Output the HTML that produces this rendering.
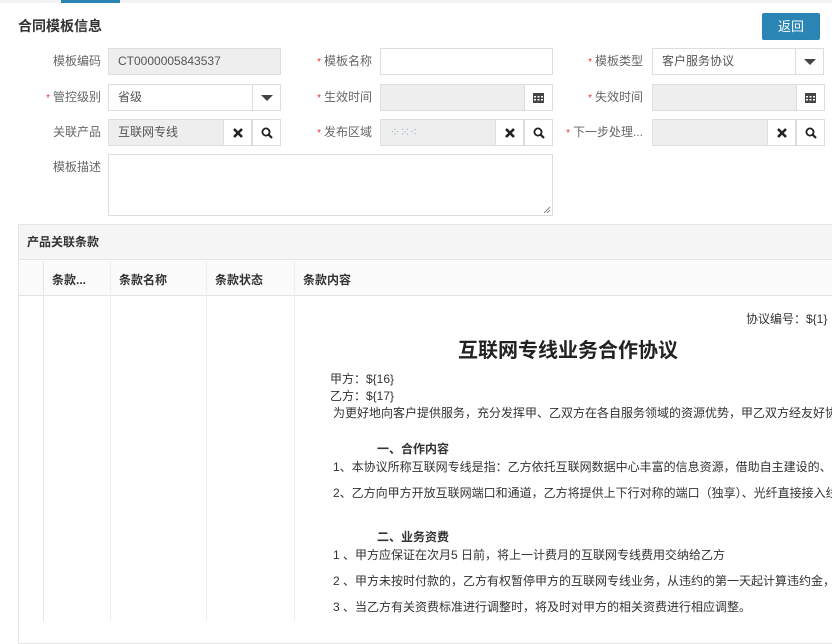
<!DOCTYPE html>
<html><head><meta charset="utf-8"><style>
*{box-sizing:border-box;margin:0;padding:0}
body{width:832px;height:618px;overflow:hidden;background:#fff;font-family:"Liberation Sans","Noto Sans CJK SC",sans-serif;font-size:12px;color:#555;position:relative}
.a{position:absolute}
.lbl{position:absolute;text-align:right;width:91px;line-height:27px;color:#666;font-size:12px;white-space:nowrap}
.lbl i{color:#e33;font-style:normal;font-size:10px;margin-right:3px}
.box{position:absolute;border:1px solid #ddd;height:27px;line-height:25px;padding-left:9px;color:#555;background:#fff}
.g{background:#eee}
.btn{position:absolute;border:1px solid #ddd;background:#fff;height:27px;width:29px;display:flex;align-items:center;justify-content:center}
.tri{width:0;height:0;border-left:6px solid transparent;border-right:6px solid transparent;border-top:6px solid #444}
.c{position:absolute;font-size:12px;color:#333;white-space:nowrap}
</style></head><body>
<div class="a" style="left:0;top:0;width:832px;height:3px;background:#f2f2f2"></div>
<div class="a" style="left:61px;top:0;width:59px;height:3px;background:#2a85b4"></div>
<div class="a" style="left:18px;top:16px;font-size:14px;font-weight:bold;color:#333">合同模板信息</div>
<div class="a" style="left:762px;top:13px;width:58px;height:27px;background:#2a85b4;border-radius:2px;color:#fff;text-align:center;line-height:27px;font-size:13px">返回</div>

<div class="lbl" style="left:10px;top:48px">模板编码</div>
<div class="box g" style="left:108px;top:48px;width:173px">CT0000005843537</div>
<div class="lbl" style="left:281px;top:48px"><i>*</i>模板名称</div>
<div class="box" style="left:380px;top:48px;width:173px"></div>
<div class="lbl" style="left:552px;top:48px"><i>*</i>模板类型</div>
<div class="box" style="left:652px;top:48px;width:144px">客户服务协议</div>
<div class="btn" style="left:795px;top:48px"><div class="tri"></div></div>

<div class="lbl" style="left:10px;top:84px"><i>*</i>管控级别</div>
<div class="box" style="left:108px;top:84px;width:145px">省级</div>
<div class="btn" style="left:252px;top:84px"><div class="tri"></div></div>
<div class="lbl" style="left:281px;top:84px"><i>*</i>生效时间</div>
<div class="box g" style="left:380px;top:84px;width:145px"></div>
<div class="btn" style="left:524px;top:84px"><svg width="11" height="11"><rect x="0" y="1" width="11" height="10" fill="#444"/><g fill="#fff"><rect x="1" y="4" width="2" height="1.5"/><rect x="4.5" y="4" width="2" height="1.5"/><rect x="8" y="4" width="2" height="1.5"/><rect x="1" y="7" width="2" height="1.5"/><rect x="4.5" y="7" width="2" height="1.5"/><rect x="8" y="7" width="2" height="1.5"/></g></svg></div>
<div class="lbl" style="left:552px;top:84px"><i>*</i>失效时间</div>
<div class="box g" style="left:652px;top:84px;width:145px"></div>
<div class="btn" style="left:796px;top:84px"><svg width="11" height="11"><rect x="0" y="1" width="11" height="10" fill="#444"/><g fill="#fff"><rect x="1" y="4" width="2" height="1.5"/><rect x="4.5" y="4" width="2" height="1.5"/><rect x="8" y="4" width="2" height="1.5"/><rect x="1" y="7" width="2" height="1.5"/><rect x="4.5" y="7" width="2" height="1.5"/><rect x="8" y="7" width="2" height="1.5"/></g></svg></div>

<div class="lbl" style="left:10px;top:119px">关联产品</div>
<div class="box g" style="left:108px;top:119px;width:116px">互联网专线</div>
<div class="btn" style="left:223px;top:119px"><svg width="10" height="10"><path d="M1 1L9 9M9 1L1 9" stroke="#222" stroke-width="2.6"/></svg></div>
<div class="btn" style="left:252px;top:119px"><svg width="12" height="12"><circle cx="5" cy="5" r="3.6" fill="none" stroke="#222" stroke-width="1.8"/><path d="M7.5 7.5L11 11" stroke="#222" stroke-width="2.2"/></svg></div>
<div class="lbl" style="left:281px;top:119px"><i>*</i>发布区域</div>
<div class="box g" style="left:380px;top:119px;width:116px;color:#9bc">⁘⁙⁖</div>
<div class="btn" style="left:495px;top:119px"><svg width="10" height="10"><path d="M1 1L9 9M9 1L1 9" stroke="#222" stroke-width="2.6"/></svg></div>
<div class="btn" style="left:524px;top:119px"><svg width="12" height="12"><circle cx="5" cy="5" r="3.6" fill="none" stroke="#222" stroke-width="1.8"/><path d="M7.5 7.5L11 11" stroke="#222" stroke-width="2.2"/></svg></div>
<div class="lbl" style="left:552px;top:119px"><i>*</i>下一步处理...</div>
<div class="box g" style="left:652px;top:119px;width:116px"></div>
<div class="btn" style="left:767px;top:119px"><svg width="10" height="10"><path d="M1 1L9 9M9 1L1 9" stroke="#222" stroke-width="2.6"/></svg></div>
<div class="btn" style="left:796px;top:119px"><svg width="12" height="12"><circle cx="5" cy="5" r="3.6" fill="none" stroke="#222" stroke-width="1.8"/><path d="M7.5 7.5L11 11" stroke="#222" stroke-width="2.2"/></svg></div>

<div class="lbl" style="left:10px;top:154px;line-height:27px">模板描述</div>
<div class="box" style="left:108px;top:154px;width:445px;height:62px"></div>
<svg class="a" style="left:542px;top:205px" width="9" height="9"><path d="M8 2L2 8M8 5L5 8" stroke="#888" stroke-width="1"/></svg>

<div class="a" style="left:18px;top:224px;width:814px;height:420px;border:1px solid #e5e5e5;border-right:none"></div>
<div class="a" style="left:19px;top:225px;width:813px;height:35px;background:#f5f5f5;border-bottom:1px solid #e3e3e3;padding-left:8px;line-height:35px;font-weight:bold;color:#333">产品关联条款</div>
<div class="a" style="left:19px;top:261px;width:813px;height:35px;background:#fafafa;border-bottom:1px solid #e3e3e3"></div>
<div class="a" style="left:43px;top:261px;width:1px;height:360px;background:#e5e5e5"></div>
<div class="a" style="left:110px;top:261px;width:1px;height:360px;background:#eee"></div>
<div class="a" style="left:206px;top:261px;width:1px;height:360px;background:#eee"></div>
<div class="a" style="left:294px;top:261px;width:1px;height:360px;background:#eee"></div>
<div class="a" style="left:52px;top:271px;font-weight:bold;color:#333">条款...</div>
<div class="a" style="left:119px;top:271px;font-weight:bold;color:#333">条款名称</div>
<div class="a" style="left:215px;top:271px;font-weight:bold;color:#333">条款状态</div>
<div class="a" style="left:303px;top:271px;font-weight:bold;color:#333">条款内容</div>

<div class="c" style="left:746px;top:310px">协议编号：${1}</div>
<div class="c" style="left:458px;top:334px;font-size:20px;font-weight:bold;color:#222">互联网专线业务合作协议</div>
<div class="c" style="left:330px;top:370px">甲方：${16}</div>
<div class="c" style="left:330px;top:387px">乙方：${17}</div>
<div class="c" style="left:333px;top:404px">为更好地向客户提供服务，充分发挥甲、乙双方在各自服务领域的资源优势，甲乙双方经友好协</div>
<div class="c" style="left:377px;top:440px;font-weight:bold">一、合作内容</div>
<div class="c" style="left:333px;top:458px">1、本协议所称互联网专线是指：乙方依托互联网数据中心丰富的信息资源，借助自主建设的、遍</div>
<div class="c" style="left:333px;top:484px">2、乙方向甲方开放互联网端口和通道，乙方将提供上下行对称的端口（独享）、光纤直接接入线</div>
<div class="c" style="left:377px;top:528px;font-weight:bold">二、业务资费</div>
<div class="c" style="left:333px;top:546px">1 、甲方应保证在次月5 日前，将上一计费月的互联网专线费用交纳给乙方</div>
<div class="c" style="left:333px;top:572px">2 、甲方未按时付款的，乙方有权暂停甲方的互联网专线业务，从违约的第一天起计算违约金，每</div>
<div class="c" style="left:333px;top:598px">3 、当乙方有关资费标准进行调整时，将及时对甲方的相关资费进行相应调整。</div>
</body></html>
